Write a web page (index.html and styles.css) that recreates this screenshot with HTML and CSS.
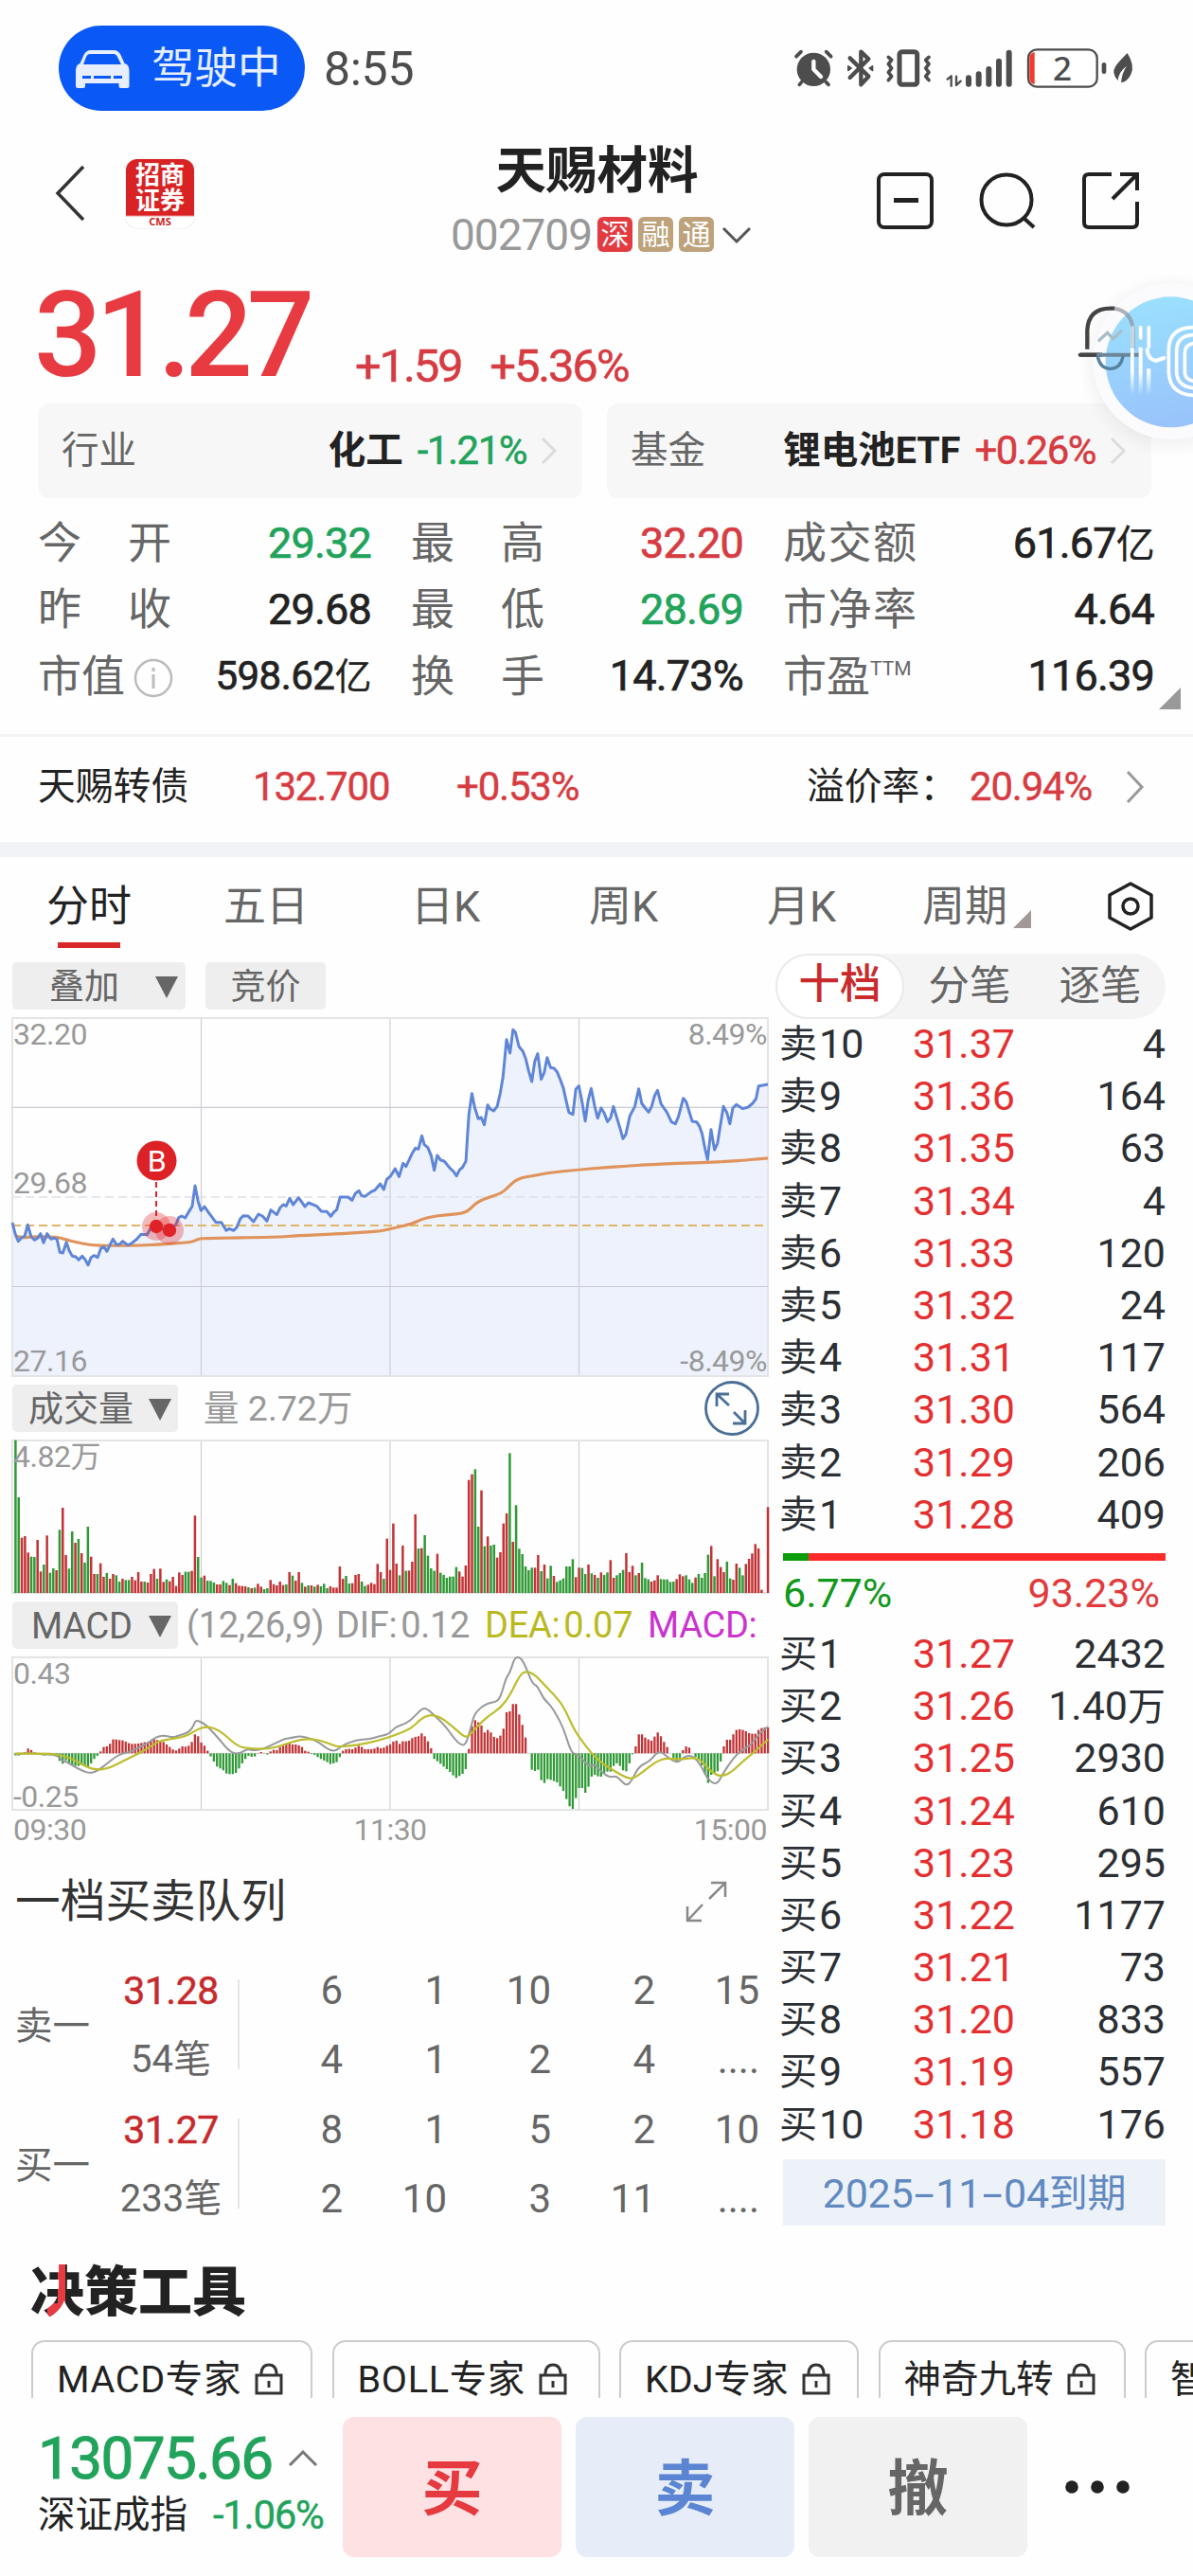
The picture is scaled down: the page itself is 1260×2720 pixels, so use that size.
FILE: index.html
```html
<!DOCTYPE html>
<html lang="zh-CN">
<head>
<meta charset="utf-8">
<title>天赐材料 002709</title>
<link rel="stylesheet" href="styles.css">
</head>
<body>
<div class="status">
  <div class="drive">
    <svg width="58" height="42" viewBox="0 0 58 42"><path fill="#e6eeff" fill-rule="evenodd" d="M17 1h24c4 0 6 2 7.500 5l4 9 2.500 1c2 2 2.500 4 2.500 8v15q0 2-2 2h-7q-2 0-2-2v-3H11v3q0 2-2 2H3q-2 0-2-2V24c0-4 .500-6 2.500-8l2-1 4-9C11 3 13 1 17 1zM16 5c-2 0-3 1-4 3l-3 8h40l-4-8c-1-2-2-3-4-3zM8 28v3h9v-3zM20 28v3h18v-3zM41 28v3h9v-3z"/></svg>
    <span>驾驶中</span>
  </div>
  <div class="clock">8:55</div>
  <svg class="sysicons" width="380" height="90" viewBox="0 0 1140 270" fill="#4d4d4d" stroke="#4d4d4d" stroke-linecap="round" stroke-linejoin="round">
    <circle cx="88" cy="130" r="53" stroke="none"/>
    <path d="M33 89L48 74M143 89L128 74M50 170L43 178M127 170L135 178" stroke-width="11" fill="none"/>
    <path d="M88 105v25l23 23" stroke="#fff" stroke-width="13" fill="none"/>
    <path d="M203 94L262 152 238 178V74L262 97 203 156" fill="none" stroke-width="13"/>
    <path d="M197 119l11 7-11 8zM275 119l-11 7 11 8z" stroke-width="4"/>
    <rect x="360" y="74" width="56" height="104" rx="8" fill="none" stroke-width="15"/>
    <path d="M325 91l10 9-10 13 10 13-10 13 10 13-10 12M453 91l-10 9 10 13-10 13 10 13-10 13 10 12" fill="none" stroke-width="11"/>
    <path d="M512 161l12-10v31M540 152v28l14-13" fill="none" stroke-width="7"/>
    <path d="M579 157v19M611 145v31M643 129v47M675 104v72M707 77v99" fill="none" stroke-width="18"/>
    <rect x="768" y="67" width="218" height="118" rx="27" fill="#fff" stroke-width="7"/>
    <path d="M788 75q-16 3-16 20v62q0 17 16 20z" fill="#f33a2c" stroke="none"/>
    <path d="M1008 115v22" stroke-width="14"/>
    <path d="M1082 78q25 40 11 68-12 24-31 25 3-31 18-52-26 19-28 46-22-23-7-46 10-14 37-41z" stroke="none"/>
    <text class="battery" x="876" y="166" text-anchor="middle" stroke="none">2</text>
  </svg>
</div>

<header class="header">
  <svg class="back" width="36" height="62" viewBox="0 0 36 62"><path d="M31 3L4 31 31 59" fill="none" stroke="#333" stroke-width="3.500"/></svg>
  <div class="logo"><b>招商</b><b>证券</b><small>CMS</small></div>
  <div class="heading">
    <h1>天赐材料</h1>
    <div class="code"><span>002709</span><i class="tag red">深</i><i class="tag">融</i><i class="tag">通</i>
      <svg width="34" height="20" viewBox="0 0 34 20"><path d="M3 3l14 14L31 3" fill="none" stroke="#555" stroke-width="3"/></svg></div>
  </div>
  <svg class="actions" width="280" height="64" viewBox="925 180 280 64" fill="none" stroke="#222" stroke-width="4">
    <rect x="928" y="185" width="56" height="56" rx="6"/><path d="M944 212.500h26" stroke-width="5"/>
    <circle cx="1063" cy="212" r="26.500"/><path d="M1081 231l11 10"/>
    <path d="M1174 185h-24q-5 0-5 5v46q0 5 5 5h46q5 0 5-5v-22M1175 211l26-26M1183 185h18v17"/>
  </svg>
</header>

<section class="price">
  <strong>31.27</strong><span>+1.59</span><span>+5.36%</span>
  <svg class="bubble" width="150" height="190" viewBox="0 0 450 570">
    <defs>
      <linearGradient id="ball" x1="0" y1="0" x2=".2" y2="1"><stop offset="0" stop-color="#9be2fe"/><stop offset=".55" stop-color="#99d2fd"/><stop offset="1" stop-color="#99c4fb"/></linearGradient>
      <radialGradient id="halo"><stop offset=".8" stop-color="#000" stop-opacity=".045"/><stop offset="1" stop-color="#000" stop-opacity="0"/></radialGradient>
      <linearGradient id="fade" x1="0" y1="0" x2="0" y2="1"><stop offset=".5" stop-color="#fff"/><stop offset="1" stop-color="#fff" stop-opacity="0"/></linearGradient>
    </defs>
    <circle cx="380" cy="288" r="292" fill="url(#halo)"/>
    <circle cx="380" cy="275" r="247" fill="#fbfafc"/>
    <circle cx="380" cy="277" r="207" fill="url(#ball)"/>
    <g fill="none" stroke-linecap="round">
      <path d="M115 236v-60q4-69 73-69h14M92 254h70" stroke="#444" stroke-width="13" stroke-linecap="butt"/>
      <path d="M200 107q56 8 60 69v60" stroke="#8a9198" stroke-opacity=".7" stroke-width="12" stroke-linecap="butt"/>
      <path d="M92 254h60" stroke="#444" stroke-width="12"/>
      <path d="M150 254h132" stroke="#6c8797" stroke-width="12"/>
      <path d="M148 260q8 38 40 38t40-38" stroke="#55839f" stroke-width="10"/>
      <path d="M153 208l26-24 18 19 25-24" stroke="#a9bdc8" stroke-width="10"/>
      <path d="M258 168v58" stroke="#c6d6df" stroke-width="12"/>
      <path d="M284 167v34M310 167v62" stroke="#fff" stroke-width="11"/>
      <path d="M305 238q2 30 28 35l25-9" stroke="#fff" stroke-width="12"/>
      <path d="M450 167q-78 2-77 73v70q4 68 77 72M450 191q-52 3-52 51v68q3 44 52 49M450 218q-25 5-26 30v65q3 18 26 24" stroke="#fff" stroke-width="11"/>
    </g>
    <path d="M252 232h11v150h-11zM278 230h12v152h-12zM303 298h13v82h-13z" fill="url(#fade)"/>
  </svg>
</section>

<section class="cards">
  <div class="card"><label>行业</label><b>化工</b><span class="num down">-1.21%</span><svg width="18" height="30" viewBox="0 0 18 30"><path d="M2 2l13 13L2 28"/></svg></div>
  <div class="card"><label>基金</label><b>锂电池ETF</b><span class="num up">+0.26%</span><svg width="18" height="30" viewBox="0 0 18 30"><path d="M2 2l13 13L2 28"/></svg></div>
</section>

<section class="stats">
  <label><i>今</i><i>开</i></label><b class="down">29.32</b><label><i>最</i><i>高</i></label><b class="up">32.20</b><label><i>成</i><i>交</i><i>额</i></label><b>61.67<em>亿</em></b>
  <label><i>昨</i><i>收</i></label><b>29.68</b><label><i>最</i><i>低</i></label><b class="down">28.69</b><label><i>市</i><i>净</i><i>率</i></label><b>4.64</b>
  <label class="tight">市值<svg width="42" height="42" viewBox="0 0 42 42"><circle cx="21" cy="21" r="19" fill="none" stroke="#bbb" stroke-width="2.500"/><path d="M21 17v15M21 10v4" stroke="#bbb" stroke-width="3"/></svg></label><b class="small">598.62<em>亿</em></b><label><i>换</i><i>手</i></label><b>14.73%</b><label class="tight">市盈<sup>TTM</sup></label><b>116.39</b>
  <svg class="corner" width="23" height="23"><path d="M23 0v23H0z" fill="#999"/></svg>
</section>

<section class="bond">
  <span class="bname">天赐转债</span><span class="up b1">132.700</span><span class="up b2">+0.53%</span>
  <span class="rate">溢价率：</span><span class="up b3">20.94%</span>
  <svg width="20" height="36" viewBox="0 0 20 36"><path d="M2 2l15 16L2 34" fill="none" stroke="#999" stroke-width="3"/></svg>
</section>

<nav class="tabs">
  <span class="on">分时</span><span>五日</span><span>日K</span><span>周K</span><span>月K</span><span>周期<svg width="19" height="19"><path d="M19 0v19H0z" fill="#a39a98"/></svg></span>
  <svg class="gear" width="50" height="54" viewBox="0 0 50 54" fill="none" stroke="#222" stroke-width="3.500" stroke-linejoin="round"><path d="M25 3L47 15v24L25 51 3 39V15z"/><circle cx="25" cy="27" r="8"/></svg>
</nav>

<main class="main">
  <div class="left">
    <div class="tools"><span class="btn wide">叠加<i class="tri"></i></span><span class="btn">竞价</span></div>
    <svg id="trend" class="chart" width="820" height="396" viewBox="0 1066 820 396"></svg>
    <div class="bar">
      <span class="btn ind">成交量<i class="tri"></i></span><span class="vol">量 2.72万</span>
      <svg class="zoomer" width="60" height="60" viewBox="0 0 60 60" fill="none" stroke="#4a6f96" stroke-width="2.800"><circle cx="30" cy="30" r="27.500"/><path d="M27 27L14 15M14 28V15h13M32 34l12 12M44 32v14H31"/></svg>
    </div>
    <svg id="volume" class="chart" width="820" height="179" viewBox="0 1512 820 179"></svg>
    <div class="bar macdbar"><span class="btn ind">MACD<i class="tri"></i></span><span class="p1">(12,26,9)</span><span class="p2">DIF:<i></i>0.12</span><span class="p3">DEA:<i></i>0.07</span><span class="p4">MACD:</span></div>
    <svg id="macd" class="chart" width="820" height="215" viewBox="0 1741 820 215"></svg>

    <div class="qtitle"><h2>一档买卖队列</h2><svg width="46" height="46" viewBox="0 0 46 46" fill="none" stroke="#888" stroke-width="2.500"><path d="M26 20L43 3M28 3h15v15M19 26L3 43M3 28v15h15"/></svg></div>
    <div class="queue">
      <span class="side">卖一</span>
      <div class="sum"><b>31.28</b><span>54笔</span></div>
      <div class="qty"><span>6</span><span>1</span><span>10</span><span>2</span><span>15</span><span>4</span><span>1</span><span>2</span><span>4</span><span>....</span></div>
    </div>
    <div class="queue">
      <span class="side">买一</span>
      <div class="sum"><b>31.27</b><span>233笔</span></div>
      <div class="qty"><span>8</span><span>1</span><span>5</span><span>2</span><span>10</span><span>2</span><span>10</span><span>3</span><span>11</span><span>....</span></div>
    </div>
  </div>

  <aside class="book">
    <div class="seg"><span class="on">十档</span><span>分笔</span><span>逐笔</span></div>
    <div class="rows">
      <div><i>卖</i><u>10</u><b>31.37</b><span>4</span></div>
      <div><i>卖</i><u>9</u><b>31.36</b><span>164</span></div>
      <div><i>卖</i><u>8</u><b>31.35</b><span>63</span></div>
      <div><i>卖</i><u>7</u><b>31.34</b><span>4</span></div>
      <div><i>卖</i><u>6</u><b>31.33</b><span>120</span></div>
      <div><i>卖</i><u>5</u><b>31.32</b><span>24</span></div>
      <div><i>卖</i><u>4</u><b>31.31</b><span>117</span></div>
      <div><i>卖</i><u>3</u><b>31.30</b><span>564</span></div>
      <div><i>卖</i><u>2</u><b>31.29</b><span>206</span></div>
      <div><i>卖</i><u>1</u><b>31.28</b><span>409</span></div>
    </div>
    <div class="ratio"><i style="width:6.77%"></i></div>
    <div class="pct"><span>6.77%</span><span>93.23%</span></div>
    <div class="rows">
      <div><i>买</i><u>1</u><b>31.27</b><span>2432</span></div>
      <div><i>买</i><u>2</u><b>31.26</b><span>1.40<em>万</em></span></div>
      <div><i>买</i><u>3</u><b>31.25</b><span>2930</span></div>
      <div><i>买</i><u>4</u><b>31.24</b><span>610</span></div>
      <div><i>买</i><u>5</u><b>31.23</b><span>295</span></div>
      <div><i>买</i><u>6</u><b>31.22</b><span>1177</span></div>
      <div><i>买</i><u>7</u><b>31.21</b><span>73</span></div>
      <div><i>买</i><u>8</u><b>31.20</b><span>833</span></div>
      <div><i>买</i><u>9</u><b>31.19</b><span>557</span></div>
      <div><i>买</i><u>10</u><b>31.18</b><span>176</span></div>
    </div>
    <div class="expire">2025<i>-</i>11<i>-</i>04<em>到期</em></div>
  </aside>
</main>

<section class="decide">
  <h2><span>决</span>策工具</h2>
  <div class="chips">
    <span class="roomy" style="width:297px">MACD专家<svg class="lock" viewBox="0 0 30 34"><path d="M2 13h26v19H2zM7 13V10q1-8 8-8t8 8v3M15 19v7"/></svg></span>
    <span class="roomy" style="width:283px">BOLL专家<svg class="lock" viewBox="0 0 30 34"><path d="M2 13h26v19H2zM7 13V10q1-8 8-8t8 8v3M15 19v7"/></svg></span>
    <span style="width:253px">KDJ专家<svg class="lock" viewBox="0 0 30 34"><path d="M2 13h26v19H2zM7 13V10q1-8 8-8t8 8v3M15 19v7"/></svg></span>
    <span style="width:261px">神奇九转<svg class="lock" viewBox="0 0 30 34"><path d="M2 13h26v19H2zM7 13V10q1-8 8-8t8 8v3M15 19v7"/></svg></span>
    <span style="width:261px">智</span>
  </div>
</section>

<footer class="footer">
  <div class="index">
    <div><strong>13075.66</strong><svg width="32" height="20" viewBox="0 0 32 20"><path d="M2 17L16 3l14 14" fill="none" stroke="#777" stroke-width="3"/></svg></div>
    <div><span>深证成指</span><em>-1.06%</em></div>
  </div>
  <span class="act buy">买</span><span class="act sell">卖</span><span class="act cancel">撤</span>
  <svg width="70" height="16" viewBox="0 0 70 16" fill="#222"><circle cx="8" cy="8" r="6.800"/><circle cx="35" cy="8" r="6.800"/><circle cx="62" cy="8" r="6.800"/></svg>
</footer>
<script src="charts.js"></script>
</body>
</html>
```
FILE: styles.css
```css
* { box-sizing: border-box; }
body, h1, h2 { margin: 0; }
body {
  width: 1260px; height: 2720px; overflow: hidden; background: #fefefe; color: #222;
  font-family: Roboto, "Noto Sans CJK SC", sans-serif; line-height: 1;
}
i, em, u { font-style: normal; text-decoration: none; }
svg { display: block; flex: none; }
.up { color: #d63c42; }
.down { color: #21a35b; }

.status { height: 120px; padding: 27px 0 0 62px; display: flex; align-items: flex-start; }
.drive { width: 260px; height: 90px; border-radius: 45px; background: #0a59f7; display: flex; align-items: center; padding: 2px 0 0 17px; color: #e6eeff; font-size: 45.500px; gap: 23px; }
.clock { margin: 21px 0 0 20px; width: 120px; font-size: 50px; color: #4d4d4d; letter-spacing: -.300px; }
.sysicons { margin: 3px 0 0 368px; }
.battery { font: 500 105px "Noto Sans", sans-serif; }

.header { height: 165px; display: flex; align-items: flex-start; position: relative; padding-left: 57px; }
.back { margin-top: 53px; }
.logo { margin: 48px 0 0 40px; width: 72px; height: 73px; border-radius: 12px; background: linear-gradient(#d92224 59px, #fff 61px); box-shadow: 0 0 1px #999; display: flex; flex-direction: column; align-items: center; color: #fff; padding-top: 4px; }
.logo b { font-size: 26px; line-height: 27px; font-weight: 700; }
.logo small { color: #c22; font: 700 11px/15px "Noto Sans"; }
.heading { width: 340px; margin: 34px 0 0 257px; display: flex; flex-direction: column; align-items: center; }
h1 { font-size: 53.500px; font-weight: 700; margin-right: 3px; }
.code { display: flex; align-items: center; gap: 6px; color: #999; font-size: 46px; letter-spacing: -1px; margin: 17px 0 0 7px; }
.code svg { margin-left: 1px; }
.tag { width: 37px; height: 37px; border-radius: 6px; background: #bda27c; color: #fff; font-size: 30px; letter-spacing: 0; line-height: 38px; text-align: center; }
.red { background: #e23b41; }
.actions { margin: 59px 0 0 123px; }

.price { height: 141px; display: flex; padding: 8px 0 0 36px; color: #e83a41; position: relative; }
.price strong { font-size: 126px; font-weight: 500; letter-spacing: -6.300px; width: 339px; line-height: 122px; }
.price span { font-size: 49px; letter-spacing: -2.200px; margin-top: 69px; margin-right: 30px; color: #d63c42; font-weight: 400; -webkit-text-stroke: .5px; }
.bubble { position: absolute; left: 1110px; top: 5px; z-index: 2; }

.cards { height: 100px; padding-left: 40px; display: flex; gap: 26px; }
.card { width: 575px; background: #f7f7f7; border-radius: 12px; display: flex; align-items: center; padding: 0 26px 0 25px; font-size: 39.500px; }
.card label { color: #666; margin-right: auto; }
.card b { font-weight: 700; margin-right: 15px; }
.num { font-size: 42px; letter-spacing: -1.500px; -webkit-text-stroke: .5px; margin-right: 15px; }
.card path { fill: none; stroke: #dcdcdc; stroke-width: 3; }

.stats { height: 249px; padding: 12px 41px 0 40px; display: grid; position: relative; grid-template-columns: 181px 171px 180px 213px 180px 254px; grid-template-rows: repeat(3, 70.300px); align-items: center; }
.stats label { color: #666; font-size: 46px; display: flex; justify-content: space-between; width: 141px; }
.stats label:nth-of-type(3n+2), .stats label:nth-of-type(3n+3) { margin-left: 42px; }
.stats b { text-align: right; font-weight: 400; font-size: 45px; letter-spacing: -.800px; -webkit-text-stroke: .7px; white-space: nowrap; }
.stats b em { font-size: 41px; -webkit-text-stroke: .2px; }
.stats .small { font-size: 42px; letter-spacing: -.500px; }
.stats .small em { font-size: 39px; }
.stats .tight { justify-content: flex-start; white-space: nowrap; }
.tight svg { margin: 4px 0 0 9px; }
.tight sup { font-size: 21px; line-height: 30px; }
.corner { position: absolute; left: 1224px; top: 200px; }

.bond { height: 130px; border-top: 3px solid #f2f2f2; border-bottom: 16px solid #f2f3f6; display: flex; align-items: center; font-size: 39.800px; padding: 0 0 5px 40px; }
.bond .up { font-size: 42px; letter-spacing: -1.200px; -webkit-text-stroke: .4px; }
.bname { width: 227px; }
.b1 { width: 215px; }
.b2 { width: 370px; }
.rate { width: 172px; white-space: nowrap; }
.b3 { width: 165px; }

.tabs { height: 103px; position: relative; display: flex; align-items: center; padding: 1px 0 0 49px; font-size: 45px; color: #666; }
.tabs span { width: 187px; display: flex; align-items: flex-end; }
.tabs .on { color: #222; position: relative; }
.tabs .on::after { content: ""; position: absolute; left: 12px; top: 60px; width: 66px; height: 6px; background: #d92828; }
.tabs span:nth-child(3) { width: 186px; padding-left: 11px; }
.tabs span:nth-child(4) { width: 188px; padding-left: 13px; }
.tabs span:nth-child(5) { width: 177px; padding-left: 13px; }
.tabs span:nth-child(6) { width: 195px; }
.tabs span svg { margin-left: 6px; }

.main { display: flex; height: 1352px; }
.left { width: 820px; flex: none; }
.tools { height: 58px; padding: 8px 0 0 13px; display: flex; gap: 21px; }
.btn { width: 127px; height: 50px; background: #eee; border-radius: 5px; color: #666; font-size: 37px; display: flex; align-items: center; justify-content: center; padding-top: 2px; }
.wide { width: 183px; justify-content: flex-start; padding-left: 39px; gap: 38px; }
.tri { border: 12px solid transparent; border-top: 23px solid #666; border-bottom: 0; }
.bar { height: 50px; display: flex; align-items: center; padding-left: 13px; font-size: 37px; color: #999; position: relative; }
.ind { width: 175px; justify-content: space-between; padding: 2px 7px 0 17px; }
.macdbar .ind { padding-left: 20px; font-size: 38px; }
.vol { width: 526px; padding: 1px 0 0 27px; font-size: 37.500px; }
.zoomer { margin: -5px 0 -5px 29px; }
.macdbar { font-size: 38px; white-space: nowrap; letter-spacing: -.300px; }
.p1 { width: 158px; margin-left: 9px; }
.p2 { width: 157px; }
.p3 { width: 172px; color: #b9b91e; }
.p4 { color: #cb33cf; }
.macdbar span > i:not(.tri) { display: inline-block; width: 4px; }
.chart text { font: 32px Roboto, "Noto Sans CJK SC", sans-serif; fill: #999; letter-spacing: -.500px; }
.qtitle { display: flex; justify-content: space-between; padding: 29px 51px 0 16px; height: 108px; }
.qtitle h2 { font-size: 47.700px; font-weight: 400; color: #333; }
.queue { height: 147px; display: flex; align-items: center; color: #666; font-size: 42px; }
.side { width: 110px; padding: 4px 0 0 16px; font-size: 39.500px; }
.sum { width: 143px; height: 95px; border-right: 2px solid #e5e5e5; display: flex; flex-direction: column; justify-content: space-between; align-items: center; }
.sum b, .sum span { margin: -10px 0; height: 42px; line-height: 44px; }
.sum b { color: #c62a2c; font-weight: 400; font-size: 41px; letter-spacing: -.500px; -webkit-text-stroke: .5px; }
.sum span { font-size: 40px; }
.qty { width: 550px; padding-top: 2px; display: grid; grid-template-columns: 109px repeat(4, 110px); grid-auto-rows: 73.500px; align-items: center; text-align: right; }

.book { width: 411px; }
.seg { margin-left: -1px; width: 412px; height: 69px; margin-top: -1px; border-radius: 35px; background: #f4f4f4; display: flex; align-items: center; font-size: 43.500px; color: #666; }
.seg span { flex: 1; text-align: center; }
.seg .on { flex: 0 0 136px; height: 69px; line-height: 62px; border-radius: 35px; background: #fff; border: 2px solid #eaeaea; color: #c92a2c; font-weight: 500; }
.rows { padding-left: 3px; margin-top: -1px; }
.rows div { height: 55.200px; display: flex; align-items: center; font-size: 43px; color: #2b2f33; }
.rows i { width: 42px; font-size: 40px; padding-top: 1px; }
.rows u { width: 99px; letter-spacing: -1px; }
.rows b { width: 110px; color: #e42f30; font-weight: 400; }
.rows span { margin-left: auto; white-space: nowrap; }
.rows em { font-size: 40px; }
.ratio { margin: 13px 0 0 7px; height: 8px; background: #ff2a2b; display: flex; }
.ratio i { background: #0a9c0a; }
.pct { display: flex; justify-content: space-between; padding: 13px 6px 0 7px; height: 72px; font-size: 43px; color: #12981a; }
.pct span + span { color: #e13b3d; }
.expire { margin: 9px 0 0 7px; height: 70px; padding-top: 3px; background: #edf2f9; color: #6089c0; font-size: 43px; letter-spacing: -.300px; display: flex; align-items: center; justify-content: center; }
.expire i { width: 24px; text-align: center; transform: scaleX(1.800); }
.expire em { font-size: 41px; }

.decide { height: 172px; overflow: hidden; }
.decide h2 { font: 900 57px/60px "Noto Sans CJK SC", sans-serif; padding: 25px 0 0 32px; height: 111px; }
.decide h2 span {
  color: transparent;
  background:
    linear-gradient(#e83a41, #e83a41) 18px 100% / 15px 24px no-repeat,
    linear-gradient(90deg, #222 29px, #e83a41 29px, #e83a41 37px, #222 37px);
  -webkit-background-clip: text; background-clip: text;
}
.chips { display: flex; gap: 20.500px; padding-left: 33px; }
.chips span { flex: none; height: 90px; border: 2px solid #ccc; border-radius: 14px; padding: 20px 0 0 25px; font-size: 39.500px; display: flex; }
.chips .roomy { letter-spacing: .7px; }
.lock { width: 30px; height: 34px; margin: 2px 0 0 14px; fill: none; stroke: #333; stroke-width: 3; }

.footer { height: 188px; display: flex; padding-top: 20px; }
.index { width: 362px; padding-left: 40px; }
.index div { display: flex; align-items: center; height: 60px; white-space: nowrap; }
.index div:first-child { height: 88px; }
.index strong { font-size: 62px; font-weight: 400; -webkit-text-stroke: 1px; color: #21a35b; letter-spacing: -1.600px; margin-right: 14px; width: 250px; }
.index div + div { height: 32px; }
.index span { font-size: 39.500px; width: 185px; }
.index em { font-size: 42px; color: #21a35b; letter-spacing: -1.300px; -webkit-text-stroke: .4px; }
.act { width: 231px; height: 148px; padding-top: 5px; border-radius: 12px; margin-right: 15px; font-size: 64px; font-weight: 700; display: flex; align-items: center; justify-content: center; }
.buy { background: #fde1e3; color: #e53a3f; }
.sell { background: #e6edf9; color: #5b84d3; }
.cancel { background: #f1f1f1; color: #666; margin-right: 39px; }
.footer > svg { margin-top: 66px; }
```
FILE: charts.js
```js
// Minute data; x runs over 240 trading minutes, heights are in plot units (3 per pixel).
const SX = 820 / 1568, SY = 1 / 3, STEP = 6.358;
const px = i => (25 + STEP * i) * SX;
const RED = '#c23335', GREEN = '#2f9a35';

const price = "25,693 31,730 37,752 43,742 50,735 56,700 63,738 70,748 76,742 82,728 88,757 95,728 103,745 109,742 115,745 121,787 127,789 134,755 140,782 146,799 153,801 159,811 166,799 172,810 178,827 184,803 190,797 197,803 204,774 210,770 216,784 222,764 228,745 235,762 241,762 248,752 258,764 264,760 275,747 285,730 297,731 306,705 315,700 325,712 342,714 355,700 361,677 367,672 374,678 381,659 388,642 394,576 400,625 406,655 413,642 420,658 436,692 447,692 457,718 463,712 472,718 478,708 485,682 491,671 501,672 512,690 522,666 530,672 539,688 547,653 559,668 566,645 572,636 578,640 585,616 592,636 603,614 616,642 623,630 640,641 649,657 660,658 668,673 674,660 680,652 687,612 703,612 711,622 718,600 725,592 730,607 737,610 749,596 757,590 768,570 775,588 781,556 789,545 798,522 806,547 814,505 820,515 832,475 839,457 845,460 852,418 857,446 864,455 871,482 877,527 883,480 890,495 897,498 909,521 916,531 922,545 928,526 934,518 941,498 944,420 947,350 953,284 959,330 966,364 972,360 978,383 985,320 990,333 997,339 1004,325 1010,285 1016,230 1023,113 1030,156 1036,82 1041,90 1048,135 1056,150 1062,175 1068,214 1074,246 1080,182 1086,158 1093,239 1099,218 1105,170 1112,202 1119,204 1125,215 1131,238 1138,268 1143,304 1149,344 1157,350 1163,270 1169,260 1175,306 1182,371 1188,304 1194,268 1201,324 1207,362 1214,330 1220,345 1227,373 1233,361 1239,325 1247,367 1253,398 1258,427 1264,413 1272,355 1282,325 1290,269 1296,315 1303,330 1310,343 1316,325 1322,291 1328,274 1335,317 1347,344 1356,374 1364,380 1370,358 1380,299 1386,311 1392,342 1398,372 1407,374 1413,389 1418,412 1424,460 1429,493 1436,398 1443,462 1449,442 1455,383 1461,325 1468,344 1474,380 1480,330 1487,319 1500,332 1511,327 1520,315 1527,300 1532,260 1551,255";
const average = "31,735 50,742 60,737 115,738 130,746 155,755 183,765 220,766 285,765 320,762 360,758 388,754 400,745 415,742 560,739 600,734 680,729 730,724 770,720 800,708 832,697 850,683 870,675 900,668 941,663 960,632 980,616 1013,600 1025,582 1040,560 1055,550 1075,545 1110,535 1165,526 1220,518 1275,513 1300,510 1370,505 1430,502 1470,499 1510,495 1530,491 1551,489";
const volume = [-484,-303,175,180,128,-115,-114,168,68,-90,182,-64,-78,72,-200,270,120,-77,-195,159,-171,126,-96,-210,115,60,-60,94,51,-63,45,60,-56,-36,45,-41,-41,51,40,66,36,-36,33,60,76,-45,77,35,-43,37,51,22,65,57,-67,-67,70,245,-114,-49,55,-39,-38,-33,27,27,-38,-32,25,-45,31,23,22,21,-18,15,-17,29,20,-12,-15,41,28,24,36,25,-27,66,-55,39,66,-32,20,-24,24,-20,26,-21,-29,-15,21,17,17,84,45,-54,-30,31,57,60,-36,-22,26,32,28,92,66,-45,172,73,220,93,-56,150,-70,71,99,249,-141,142,-183,-118,-78,-70,124,-64,-57,-48,-52,-52,-82,68,52,87,358,376,-392,-210,325,-148,179,-150,-153,112,129,220,252,-443,162,-278,-140,-123,-84,-72,-80,80,120,-69,90,-46,-86,54,-35,-40,-46,-84,-84,-107,50,80,-79,-60,90,-62,57,-48,65,-57,-65,104,48,-56,-63,-73,126,66,86,-56,63,-96,-47,-43,36,40,56,-44,-43,-43,-35,-36,44,59,53,-56,-43,-32,49,-60,-48,-63,-121,149,-53,107,82,66,-99,-46,42,93,-80,-56,92,108,125,155,141,10,0,272];
const hist = [-7,-7,-4,3,15,10,3,-5,-3,-7,-2,-5,-5,-10,-24,-33,-22,-32,-38,-40,-40,-38,-40,-42,-32,-18,-8,6,20,22,30,44,44,42,41,37,32,30,30,31,33,35,35,38,45,42,40,36,28,20,12,9,15,22,21,24,36,60,54,34,24,8,-10,-26,-42,-48,-54,-64,-66,-66,-62,-48,-32,-18,-8,-11,-10,1,4,1,-4,6,11,10,20,24,28,33,28,28,25,20,8,5,-2,-5,-12,-18,-23,-28,-34,-32,-28,-12,8,13,14,13,18,24,20,13,13,13,15,20,16,18,24,28,37,40,30,38,38,40,48,52,54,63,54,38,16,-18,-25,-33,-42,-50,-59,-70,-78,-72,-65,-50,14,86,105,98,88,66,74,66,52,48,56,78,130,133,156,156,123,90,50,0,-52,-56,-52,-85,-94,-82,-84,-88,-92,-105,-119,-145,-168,-176,-142,-110,-110,-125,-106,-74,-68,-73,-74,-62,-58,-58,-40,-32,-40,-54,-57,-32,-3,22,60,60,50,44,40,53,66,54,36,20,0,-16,-26,-16,10,22,18,0,-12,-22,-38,-66,-94,-68,-62,-57,-26,22,43,43,60,74,76,74,70,64,62,62,74,80,82,82];
const dif = "31,516 56,513 90,518 115,519 125,538 135,541 150,556 165,568 180,577 195,572 215,548 235,523 250,513 265,508 285,492 300,480 315,462 330,457 350,464 362,457 380,449 390,430 394,412 399,410 410,418 420,430 445,473 460,503 475,516 487,512 500,500 515,506 535,498 560,479 575,468 590,465 605,459 630,468 645,481 665,504 678,507 690,490 720,471 745,470 765,460 785,454 800,429 820,420 835,401 853,371 863,373 880,398 900,428 915,463 930,487 940,488 950,440 957,393 970,370 985,355 1005,350 1013,325 1022,275 1030,258 1038,217 1045,208 1053,214 1062,240 1075,293 1085,300 1098,342 1112,362 1125,395 1138,435 1149,490 1157,516 1170,520 1180,540 1192,558 1200,548 1215,573 1230,590 1245,586 1255,602 1265,616 1275,604 1290,555 1312,540 1325,514 1335,508 1350,528 1368,546 1385,521 1400,523 1415,550 1430,599 1448,614 1460,578 1475,543 1490,514 1505,498 1520,482 1535,448 1551,430";
const dea = "31,515 90,514 120,518 150,534 175,558 195,566 215,564 240,546 275,518 300,497 320,476 340,470 375,461 400,437 415,430 432,433 450,450 480,492 500,498 540,501 570,489 600,473 620,468 645,472 670,487 685,494 720,488 765,474 800,455 830,436 850,405 865,393 880,394 895,406 915,430 935,459 945,463 965,427 985,397 1010,372 1030,330 1050,265 1063,253 1080,265 1100,298 1120,330 1138,365 1160,440 1175,474 1195,515 1215,545 1245,574 1265,591 1278,595 1300,571 1325,540 1345,529 1370,534 1405,527 1420,543 1440,578 1460,588 1480,570 1500,540 1525,508 1551,470";

const smooth = s => {
  const p = s.split(' ').map(v => v.split(',').map(Number));
  let d = 'M' + p[0];
  for (let i = 1; i < p.length - 1; i++) d += `Q${p[i]} ${(p[i][0] + p[i + 1][0]) / 2},${(p[i][1] + p[i + 1][1]) / 2}`;
  return d + 'L' + p[p.length - 1];
};
const path = (d, color, w, top) => `<path d="${d}" transform="translate(0 ${top}) scale(${SX} ${SY})" vector-effect="non-scaling-stroke" fill="none" stroke="${color}" stroke-width="${w}" stroke-linejoin="round"/>`;
const frame = (t, b) => `<path d="M212.500 ${t}V${b}M412 ${t}V${b}M611.500 ${t}V${b}" stroke="#d0d0d4" stroke-width="1.200"/><rect x="13" y="${t}" width="798" height="${b - t}" fill="none" stroke="#e4e4e4" stroke-width="2"/>`;
const label = (x, y, s, anchor = 'start') => `<text x="${x}" y="${y}" text-anchor="${anchor}">${s}</text>`;
const bars = (data, base, w) => data.map((v, k) => {
  const h = Math.abs(v) * SY, up = v > 0;
  return `<rect x="${(px(k + 1) - w / 2).toFixed(2)}" y="${(base === 1851.3 && !up ? base : base - h).toFixed(2)}" width="${w}" height="${h.toFixed(2)}" fill="${up ? RED : GREEN}"/>`;
}).join('');

document.getElementById('trend').innerHTML =
  `<path d="M${price.split(' ').join('L')}L1551,1178L25,1178Z" transform="translate(0 1060) scale(${SX} ${SY})" fill="#edf2fd"/>` +
  frame(1075, 1453) +
  `<path d="M13 1169.300H811M13 1358.500H811" stroke="#c9ccd4" stroke-width="1.200"/>
   <path d="M13 1264H811" stroke="#dcdfe6" stroke-width="1.500" stroke-dasharray="9 5"/>
   <path d="M13 1294H811" stroke="#e0b567" stroke-width="2" stroke-dasharray="9 5"/>` +
  path(smooth(average), '#e0935a', 3.1, 1060) +
  path('M' + price.split(' ').join('L'), '#5f86d6', 3, 1060) +
  `<path d="M165 1248v36" stroke="#dc2226" stroke-width="2" stroke-dasharray="6 4"/>
   <circle cx="165" cy="1295" r="15" fill="#e2242a" fill-opacity=".32"/><circle cx="179" cy="1299" r="15" fill="#e2242a" fill-opacity=".32"/>
   <circle cx="165" cy="1295" r="7.200" fill="#e02328"/><circle cx="179" cy="1299" r="7.200" fill="#e02328"/>
   <circle cx="165.500" cy="1225.500" r="21" fill="#dc2226"/>
   <text x="165.500" y="1237" text-anchor="middle" style="fill:#fff">B</text>` +
  label(14, 1103, '32.20') + label(14, 1260, '29.68') + label(14, 1448, '27.16') +
  label(810, 1103, '8.49%', 'end') + label(810, 1448, '-8.49%', 'end');

document.getElementById('volume').innerHTML = frame(1521, 1682) + bars(volume, 1682, 2.5) + label(14, 1549, '4.82万');

document.getElementById('macd').innerHTML = frame(1750, 1911) +
  `<path d="M13 1851.300H811" stroke="#ddd" stroke-width="1"/>` + bars(hist, 1851.3, 2.3) +
  path(smooth(dif), '#98999c', 2, 1680) + path(smooth(dea), '#bdbd2c', 2.2, 1680) +
  label(14, 1778, '0.43') + label(14, 1908, '-0.25') +
  label(14, 1943, '09:30') + label(412, 1943, '11:30', 'middle') + label(810, 1943, '15:00', 'end');
```
